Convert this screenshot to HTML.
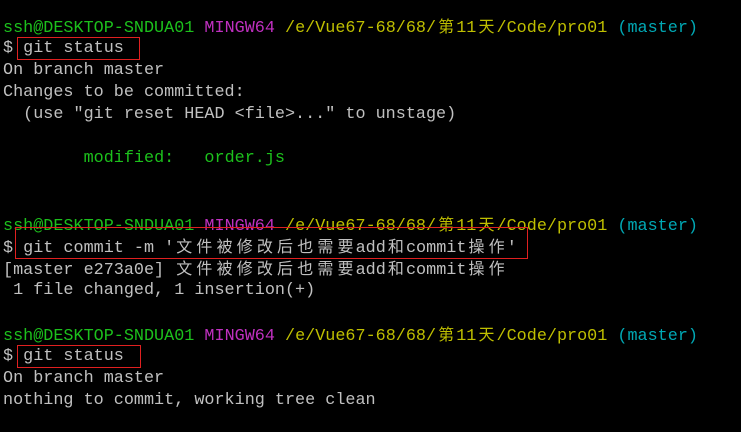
<!DOCTYPE html>
<html><head><meta charset="utf-8"><style>
html,body{margin:0;padding:0;background:#000;width:741px;height:432px;overflow:hidden}
.l{position:absolute;left:3px;height:22px;line-height:22px;font:16.8px "Liberation Mono","Noto Sans CJK SC",monospace;color:#c0c0c0;white-space:pre}
.g{color:#1cc01c}.m{color:#c030c0}.y{color:#bfbf00}.cy{color:#00a8b4}
.c{display:inline-block;width:20.16px;line-height:16px;vertical-align:baseline;text-align:center;font-family:"Noto Sans CJK SC",sans-serif;font-size:16px}
.box{position:absolute;border:1px solid #e02020}
</style></head><body>
<div class="l" style="top:17px"><span class="g">ssh@DESKTOP-SNDUA01</span> <span class="m">MINGW64</span> <span class="y">/e/Vue67-68/68/<span class="c">第</span>11<span class="c">天</span>/Code/pro01</span> <span class="cy">(master)</span></div>
<div class="l" style="top:39px">$ git status</div>
<div class="l" style="top:61px">On branch master</div>
<div class="l" style="top:83px">Changes to be committed:</div>
<div class="l" style="top:105px">  (use "git reset HEAD &lt;file&gt;..." to unstage)</div>
<div class="l" style="top:149px">        <span class="g">modified:   order.js</span></div>
<div class="l" style="top:215px"><span class="g">ssh@DESKTOP-SNDUA01</span> <span class="m">MINGW64</span> <span class="y">/e/Vue67-68/68/<span class="c">第</span>11<span class="c">天</span>/Code/pro01</span> <span class="cy">(master)</span></div>
<div class="l" style="top:237px">$ git commit -m '<span class="c">文</span><span class="c">件</span><span class="c">被</span><span class="c">修</span><span class="c">改</span><span class="c">后</span><span class="c">也</span><span class="c">需</span><span class="c">要</span>add<span class="c">和</span>commit<span class="c">操</span><span class="c">作</span>'</div>
<div class="l" style="top:259px">[master e273a0e] <span class="c">文</span><span class="c">件</span><span class="c">被</span><span class="c">修</span><span class="c">改</span><span class="c">后</span><span class="c">也</span><span class="c">需</span><span class="c">要</span>add<span class="c">和</span>commit<span class="c">操</span><span class="c">作</span></div>
<div class="l" style="top:281px"> 1 file changed, 1 insertion(+)</div>
<div class="l" style="top:325px"><span class="g">ssh@DESKTOP-SNDUA01</span> <span class="m">MINGW64</span> <span class="y">/e/Vue67-68/68/<span class="c">第</span>11<span class="c">天</span>/Code/pro01</span> <span class="cy">(master)</span></div>
<div class="l" style="top:347px">$ git status</div>
<div class="l" style="top:369px">On branch master</div>
<div class="l" style="top:391px">nothing to commit, working tree clean</div>
<div class="box" style="left:17px;top:37px;width:121px;height:21px"></div>
<div class="box" style="left:15px;top:227px;width:511px;height:30px"></div>
<div class="box" style="left:17px;top:345px;width:122px;height:21px"></div>
</body></html>
